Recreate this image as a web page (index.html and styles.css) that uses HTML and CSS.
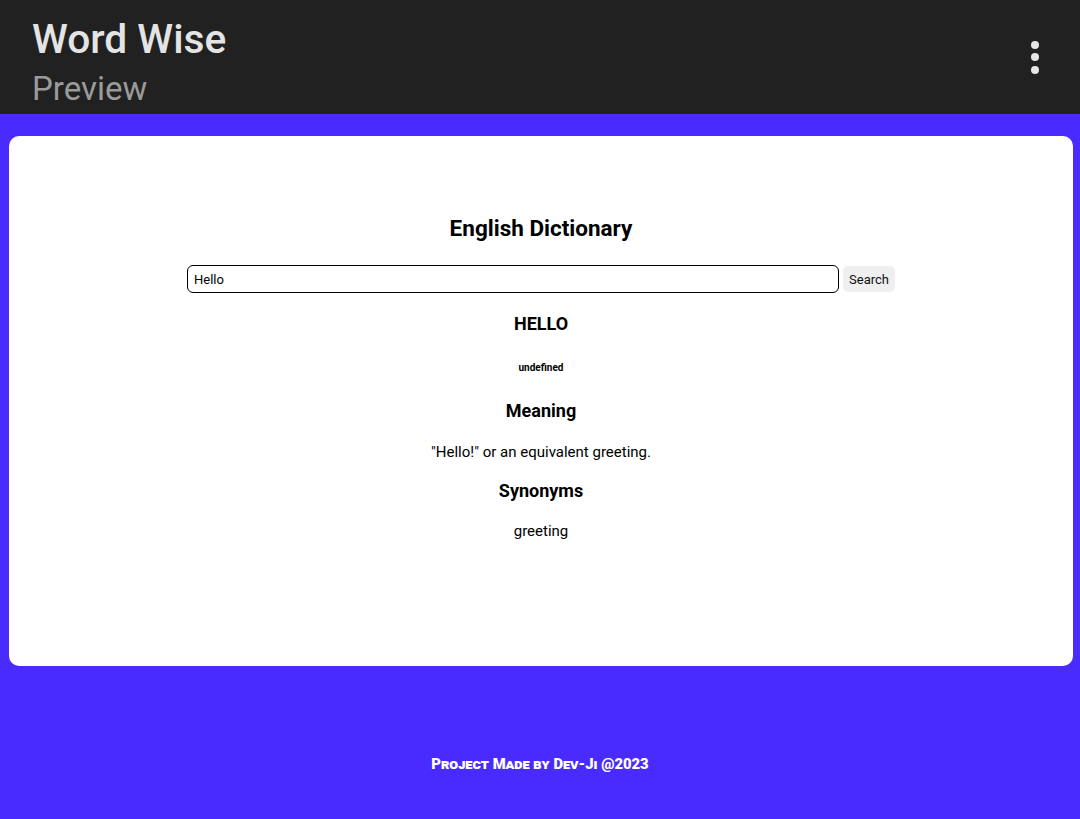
FILE: index.html
```html
<!DOCTYPE html>
<html>
<head>
<meta charset="utf-8">
<link rel="stylesheet" href="styles.css">
</head>
<body>
<header class="topbar">
  <div class="brand">
    <div class="brand-title">Word Wise</div>
    <div class="brand-sub">Preview</div>
  </div>
  <div class="menu" aria-label="menu">
    <span class="dot"></span><span class="dot"></span><span class="dot"></span>
  </div>
</header>
<main class="page">
  <section class="card">
    <h2 class="card-title">English Dictionary</h2>
    <form class="search">
      <input class="search-input" type="text" value="Hello">
      <button class="search-btn" type="button">Search</button>
    </form>
    <h3 class="word">HELLO</h3>
    <h5 class="phonetic">undefined</h5>
    <h3 class="section-title meaning-title">Meaning</h3>
    <p class="text meaning-text">"Hello!" or an equivalent greeting.</p>
    <h3 class="section-title syn-title">Synonyms</h3>
    <p class="text syn-text">greeting</p>
  </section>
  <footer class="footer">Project Made by Dev-Ji @2023</footer>
</main>
</body>
</html>
```
FILE: styles.css
```css
html, body {
  margin: 0;
  padding: 0;
}
body {
  width: 1080px;
  height: 819px;
  overflow: hidden;
  background: #4a2bff;
  font-family: Roboto, "Liberation Sans", sans-serif;
}
.topbar {
  height: 114px;
  background: #212121;
  display: flex;
  justify-content: space-between;
  align-items: center;
  padding: 0 41px 0 32px;
  box-sizing: border-box;
}
.brand {
  display: flex;
  flex-direction: column;
}
.brand-title {
  font-size: 40.7px;
  font-weight: 500;
  color: #e4e4e4;
  line-height: 48px;
  margin-top: 10px;
}
.brand-sub {
  font-size: 33px;
  color: #9a9a9a;
  line-height: 40px;
  margin-top: 6px;
}
.menu {
  display: flex;
  flex-direction: column;
  gap: 4.5px;
}
.dot {
  width: 8px;
  height: 8px;
  border-radius: 50%;
  background: #e6e6e6;
}
.page {
  display: flex;
  flex-direction: column;
}
.card {
  margin: 22px 7px 0 9px;
  height: 530px;
  box-sizing: border-box;
  background: #fff;
  border-radius: 10px;
  display: flex;
  flex-direction: column;
  align-items: center;
  padding-top: 77px;
  color: #000;
}
.card-title {
  margin: 0;
  font-size: 22.5px;
  font-weight: 700;
  line-height: 30px;
}
.search {
  margin-top: 22px;
  display: flex;
  gap: 4px;
  align-items: center;
}
.search-input {
  width: 652px;
  height: 28px;
  box-sizing: border-box;
  border: 1px solid #000;
  border-radius: 6px;
  padding: 0 6px;
  font-family: Roboto, "Liberation Sans", sans-serif;
  font-size: 13px;
  color: #000;
  outline: none;
}
.search-btn {
  height: 26px;
  padding: 0 6px;
  border: none;
  border-radius: 5px;
  background: #efefef;
  font-family: Roboto, "Liberation Sans", sans-serif;
  font-size: 13px;
  color: #111;
}
.word {
  margin: 19px 0 0;
  font-size: 18px;
  font-weight: 700;
  line-height: 24px;
}
.phonetic {
  margin: 25px 0 0;
  font-size: 10px;
  font-weight: 700;
  line-height: 14px;
}
.section-title {
  margin: 0;
  font-size: 18px;
  font-weight: 700;
  line-height: 24px;
}
.meaning-title {
  margin-top: 24px;
}
.syn-title {
  margin-top: 18px;
}
.text {
  margin: 0;
  font-size: 15px;
  line-height: 18px;
}
.meaning-text {
  margin-top: 20px;
}
.syn-text {
  margin-top: 19px;
}
.footer {
  margin-top: 88px;
  text-align: center;
  color: #fff;
  font-family: Roboto, "Liberation Sans", sans-serif;
  font-variant: small-caps;
  font-weight: 900;
  font-size: 14.8px;
  line-height: 20px;
}
```
